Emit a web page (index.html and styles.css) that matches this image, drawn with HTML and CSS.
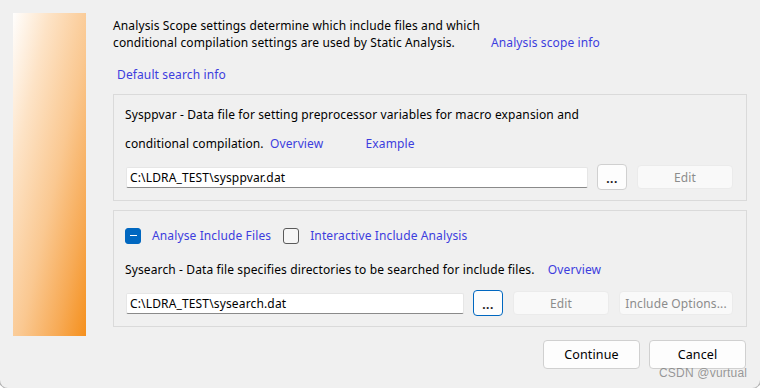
FILE: index.html
```html
<!DOCTYPE html>
<html lang="en">
<head>
  <meta charset="UTF-8">
  <title>Analysis Scope</title>
  <link rel="stylesheet" href="styles.css">
</head>
<body>
  <div class="window">
    <div class="banner"></div>

    <div class="main">
      <div class="intro">
        <p class="intro-text">Analysis Scope settings determine which include files and which<br>conditional compilation settings are used by Static Analysis.</p>
        <a class="link" href="#">Analysis scope info</a>
      </div>
      <a class="link default-link" href="#">Default search info</a>

      <!-- Sysppvar -->
      <div class="group group-sysppvar">
        <p class="label">Sysppvar - Data file for setting preprocessor variables for macro expansion and</p>
        <p class="label second">conditional compilation.
          <a class="link overview" href="#">Overview</a>
          <a class="link example" href="#">Example</a>
        </p>
        <div class="file-row">
          <input class="file-input wide" type="text" value="C:\LDRA_TEST\sysppvar.dat">
          <button class="btn browse">...</button>
          <button class="btn disabled">Edit</button>
        </div>
      </div>

      <!-- Sysearch -->
      <div class="group group-sysearch">
        <div class="check-row">
          <span class="checkbox checked"><span class="dash"></span></span>
          <span class="link check-label">Analyse Include Files</span>
          <span class="checkbox"></span>
          <span class="link check-label">Interactive Include Analysis</span>
        </div>
        <p class="label third">Sysearch - Data file specifies directories to be searched for include files.
          <a class="link overview2" href="#">Overview</a>
        </p>
        <div class="file-row">
          <input class="file-input narrow" type="text" value="C:\LDRA_TEST\sysearch.dat">
          <button class="btn browse focused">...</button>
          <button class="btn disabled">Edit</button>
          <button class="btn disabled options">Include Options...</button>
        </div>
      </div>

      <div class="actions">
        <button class="btn action">Continue</button>
        <button class="btn action">Cancel</button>
      </div>
    </div>

    <span class="watermark">CSDN @vurtual</span>
  </div>
</body>
</html>
```

FILE: styles.css
```css
/* General styles */
body {
  margin: 0;
  background: #ffffff;
  font-family: 'Segoe UI', 'Noto Sans', sans-serif;
  font-size: 12px;
  letter-spacing: 0.12px;
  color: #000;
}

.window {
  position: relative;
  display: flex;
  width: 760px;
  height: 388px;
  box-sizing: border-box;
  padding-top: 13px;
  background: #f0f0f0;
  border-radius: 0 0 8px 8px;
  box-shadow: 0 0 0 1px #b5b5b5;
  overflow: hidden;
}

.banner {
  flex: none;
  width: 73px;
  height: 323px;
  margin-left: 13px;
  background: linear-gradient(to bottom right, #fffefd 0%, #fde3c6 25%, #fac891 55%, #f7aa55 80%, #f5901d 100%);
}

.main {
  width: 634px;
  margin-left: 27px;
  padding-top: 4px;
}

p {
  margin: 0;
  line-height: 17px;
}

.link {
  color: #3d3dde;
  text-decoration: none;
  line-height: 17px;
}

/* Intro */
.intro {
  display: flex;
  align-items: flex-end;
  gap: 11px;
}

.default-link {
  display: block;
  margin: 15px 0 0 4px;
}

/* Group boxes */
.group {
  border: 1px solid #dadada;
  padding: 11px 13px 10px 11px;
}

.group-sysppvar {
  margin-top: 11px;
}

.group-sysearch {
  margin-top: 9px;
  padding-top: 16px;
}

.label.second {
  margin-top: 12px;
}

.overview {
  margin-left: 3px;
}

.example {
  margin-left: 39px;
}

.overview2 {
  margin-left: 10px;
}

.label.third {
  margin-top: 17px;
}

.file-row {
  display: flex;
  align-items: center;
  margin-top: 12px;
  padding-left: 1px;
  height: 26px;
}

.file-input {
  box-sizing: border-box;
  height: 21px;
  padding: 0 3px;
  border: 1px solid #e6e6e6;
  border-bottom-color: #8a8a8a;
  border-radius: 2px;
  background: #fff;
  font-family: inherit;
  font-size: 12px;
  letter-spacing: 0.15px;
  color: #000;
  outline: none;
}

.file-input.wide {
  width: 462px;
}

.file-input.narrow {
  width: 338px;
}

/* Buttons */
.btn {
  box-sizing: border-box;
  height: 26px;
  border: 1px solid #d0d0d0;
  border-radius: 4px;
  background: #fdfdfd;
  font-family: inherit;
  font-size: 12px;
  letter-spacing: 0.12px;
  color: #000;
  padding: 0;
}

.browse {
  width: 30px;
  margin-left: 9px;
  font-weight: bold;
  letter-spacing: 0.5px;
  padding-top: 3px;
  color: #1a1a1a;
}

.browse.focused {
  border-color: #0067c0;
}

.disabled {
  width: 96px;
  height: 24px;
  margin-left: 10px;
  background: #f9f9f9;
  border-color: #ebebeb;
  color: #8c8c8c;
}

.options {
  width: 114px;
}

/* Checkboxes */
.check-row {
  display: flex;
  align-items: center;
  height: 17px;
}

.checkbox {
  box-sizing: border-box;
  width: 16px;
  height: 16px;
  border: 1px solid #5a5a5a;
  border-radius: 3px;
  background: #f6f6f6;
  display: flex;
  align-items: center;
  justify-content: center;
}

.checkbox.checked {
  background: #0067c0;
  border-color: #0067c0;
}

.dash {
  width: 7px;
  height: 1px;
  background: #fff;
}

.check-label {
  margin: 0 12px 0 11px;
}

/* Dialog actions */
.actions {
  display: flex;
  justify-content: flex-end;
  gap: 9px;
  margin-top: 13px;
  padding-right: 1px;
}

.action {
  width: 97px;
  height: 29px;
  font-size: 12.5px;
}

.watermark {
  position: absolute;
  left: 659px;
  top: 366px;
  font-family: 'Liberation Sans', Arial, sans-serif;
  font-size: 12px;
  letter-spacing: 0.2px;
  color: rgba(120, 120, 120, 0.75);
}
```
